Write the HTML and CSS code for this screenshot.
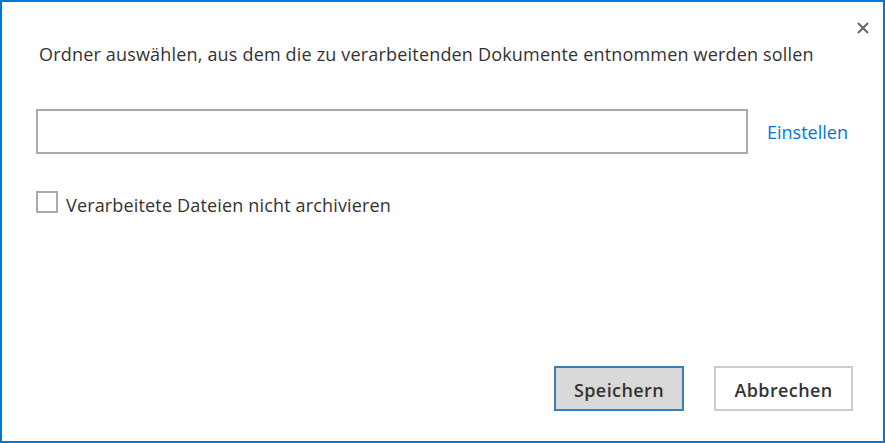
FILE: index.html
```html
<!DOCTYPE html>
<html lang="de">
<head>
<meta charset="utf-8">
<link rel="stylesheet" href="styles.css">
</head>
<body>
<div class="dialog">
  <div class="close-row">
    <button class="close" aria-label="Schließen">
      <svg width="12" height="12" viewBox="0 0 12 12"><path d="M1 1 L11 11 M11 1 L1 11" stroke="#666" stroke-width="2" fill="none"/></svg>
    </button>
  </div>
  <p class="title">Ordner auswählen, aus dem die zu verarbeitenden Dokumente entnommen werden sollen</p>
  <div class="path-row">
    <input class="path" type="text">
    <a class="link" href="#">Einstellen</a>
  </div>
  <label class="check-row">
    <span class="box"></span>
    <span class="check-label">Verarbeitete Dateien nicht archivieren</span>
  </label>
  <div class="spacer"></div>
  <div class="buttons">
    <button class="btn primary">Speichern</button>
    <button class="btn">Abbrechen</button>
  </div>
</div>
</body>
</html>
```
FILE: styles.css
```css
html, body {
  margin: 0;
  padding: 0;
  background: #fff;
}
body {
  font-family: "Open Sans", "Noto Sans", sans-serif;
  color: #333;
}
.dialog {
  box-sizing: border-box;
  width: 885px;
  height: 443px;
  border: 2px solid #0078d7;
  display: flex;
  flex-direction: column;
  padding: 0 0 0 34px;
}
.close-row {
  display: flex;
  justify-content: flex-end;
  box-sizing: border-box;
  height: 40px;
  padding-top: 20px;
  padding-right: 14px;
}
.close {
  border: 0;
  background: none;
  padding: 0;
  width: 12px;
  height: 12px;
  display: flex;
}
.title {
  margin: 0;
  font-size: 18px;
  line-height: 24px;
  letter-spacing: 0.18px;
  padding-left: 3px;
  color: #333;
}
.path-row {
  display: flex;
  align-items: center;
  margin-top: 43px;
}
.path {
  box-sizing: border-box;
  width: 712px;
  height: 45px;
  border: 2px solid #aaa;
  margin: 0;
  outline: none;
}
.link {
  margin-left: 19px;
  color: #0078d7;
  text-decoration: none;
  font-size: 18px;
  line-height: 24px;
}
.check-row {
  display: flex;
  align-items: flex-start;
  margin-top: 37px;
}
.box {
  box-sizing: border-box;
  width: 22px;
  height: 22px;
  border: 2px solid #aaa;
}
.check-label {
  margin-left: 8px;
  margin-top: 2px;
  font-size: 18px;
  line-height: 24px;
  letter-spacing: 0.16px;
  color: #333;
}
.spacer {
  flex: 1;
}
.buttons {
  display: flex;
  justify-content: flex-end;
  gap: 30px;
  padding-right: 30px;
  margin-bottom: 30px;
}
.btn {
  box-sizing: border-box;
  height: 45px;
  width: 139px;
  padding: 2px 0 0;
  border: 2px solid #ccc;
  background: #fff;
  font-family: "Open Sans", "Noto Sans", sans-serif;
  font-weight: 600;
  font-size: 18px;
  line-height: 24px;
  letter-spacing: 0.4px;
  color: #333;
}
.btn.primary {
  width: 130px;
  background: #d9d9d9;
  border-color: #3a7eb8;
}
```
